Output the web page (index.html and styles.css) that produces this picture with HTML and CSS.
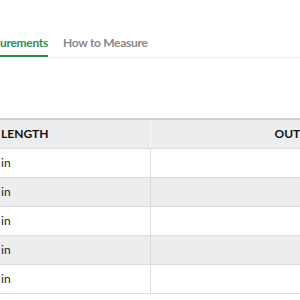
FILE: index.html
```html
<!DOCTYPE html>
<html lang="en">
<head>
    <meta charset="UTF-8">
    <meta name="viewport" content="width=device-width, initial-scale=1.0">
    <title>Size Guide</title>
    <link rel="stylesheet" href="styles.css">
</head>
<body>
    <div class="size-guide">
        <div class="tabs">
            <div class="tab active">urements</div>
            <div class="tab">How to Measure</div>
        </div>

        <table class="size-table">
            <thead>
                <tr>
                    <th class="col-length">LENGTH</th>
                    <th class="col-outside">OUTSIDE LEG</th>
                </tr>
            </thead>
            <tbody>
                <tr><td>in</td><td></td></tr>
                <tr><td>in</td><td></td></tr>
                <tr><td>in</td><td></td></tr>
                <tr><td>in</td><td></td></tr>
                <tr><td>in</td><td></td></tr>
            </tbody>
        </table>
    </div>
</body>
</html>
```

FILE: styles.css
```css
:root {
    --green: #2f8f4e;
    --muted: #8a8a8a;
    --text: #1f1f1f;
    --row-alt: #ecedef;
    --line: #dcdddf;
}

* {
    margin: 0;
    padding: 0;
    box-sizing: border-box;
}

body {
    background: #fff;
    font-family: Lato, "Open Sans", sans-serif;
    overflow: hidden;
}

.size-guide {
    width: 300px;
    padding-top: 35px;
}

.tabs {
    display: flex;
    gap: 15px;
    border-bottom: 1px solid #ececec;
}

.tab {
    font-size: 12px;
    font-weight: 700;
    letter-spacing: -0.3px;
    color: var(--muted);
    padding-bottom: 4px;
    border-bottom: 2px solid transparent;
    line-height: 16px;
}

.tab.active {
    color: var(--green);
    border-bottom-color: var(--green);
}

.size-table {
    margin-top: 60px;
    width: 420px;
    border-collapse: collapse;
    font-size: 12px;
    color: var(--text);
}

.size-table thead tr {
    background: var(--row-alt);
    border-top: 2px solid #cfd0d2;
}

.size-table th {
    height: 29px;
    font-weight: 700;
    text-align: left;
    padding: 0 1px;
    color: #111;
    border-bottom: 1px solid var(--line);
}

.size-table td {
    height: 29px;
    padding: 0 1px;
    border-bottom: 1px solid var(--line);
}

.size-table .col-length {
    width: 150px;
    border-right: 1px solid #f8f8f8;
}

.size-table td:first-child {
    border-right: 1px solid var(--line);
}

.size-table .col-outside {
    padding-left: 124px;
}

.size-table tbody tr:nth-child(even) {
    background: var(--row-alt);
}
```
